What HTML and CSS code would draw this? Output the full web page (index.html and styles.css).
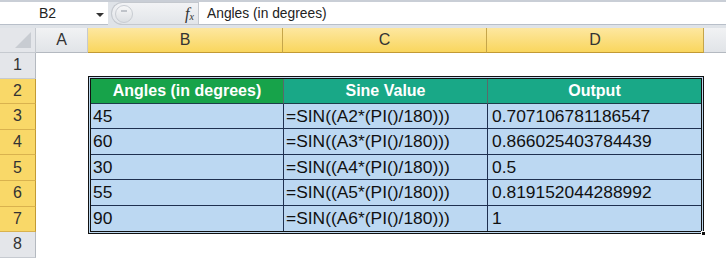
FILE: index.html
```html
<!DOCTYPE html>
<html>
<head>
<meta charset="utf-8">
<link rel="stylesheet" href="styles.css">
</head>
<body>
<div class="app">
  <div class="fbar">
    <div class="namebox"><span class="name">B2</span><span class="dd"></span></div>
    <div class="pill">
      <span class="knob"></span>
      <span class="fx">f<sub>x</sub></span>
    </div>
    <div class="formula">Angles (in degrees)</div>
  </div>
  <div class="sheet">
    <div class="corner"><span class="tri"></span></div>
    <div class="ch">A</div>
    <div class="ch sel">B</div>
    <div class="ch sel">C</div>
    <div class="ch sel">D</div>
    <div class="ch rest"></div>

    <div class="rh">1</div>
    <div class="rh sel">2</div>
    <div class="rh sel">3</div>
    <div class="rh sel">4</div>
    <div class="rh sel">5</div>
    <div class="rh sel">6</div>
    <div class="rh sel">7</div>
    <div class="rh">8</div>

    <div class="table">
      <div class="th green">Angles (in degrees)</div>
      <div class="th teal">Sine Value</div>
      <div class="th teal">Output</div>

      <div class="td">45</div><div class="td">=SIN((A2*(PI()/180)))</div><div class="td">0.707106781186547</div>
      <div class="td">60</div><div class="td">=SIN((A3*(PI()/180)))</div><div class="td">0.866025403784439</div>
      <div class="td">30</div><div class="td">=SIN((A4*(PI()/180)))</div><div class="td">0.5</div>
      <div class="td">55</div><div class="td">=SIN((A5*(PI()/180)))</div><div class="td">0.819152044288992</div>
      <div class="td">90</div><div class="td">=SIN((A6*(PI()/180)))</div><div class="td">1</div>
      <span class="handle"></span>
    </div>
  </div>
</div>
</body>
</html>
```
FILE: styles.css
```css
* { box-sizing: border-box; }
html, body { margin: 0; padding: 0; background: #fff; }
body { font-family: "Liberation Sans", Arial, sans-serif; color: #222; }
.app { width: 726px; height: 259px; overflow: hidden; }

.fbar {
  height: 28px;
  display: flex;
  background: #dfe3e8;
  border-top: 2px solid #c9ced6;
  padding-bottom: 3px;
}
.namebox {
  width: 108px;
  background: #fff;
  display: flex;
  align-items: center;
  border-bottom: 1px solid #b8bfc9;
  position: relative;
}
.name { font-size: 14px; margin-left: 39px; color: #222; }
.dd {
  position: absolute; left: 96px; top: 11px;
  border-left: 4px solid transparent; border-right: 4px solid transparent;
  border-top: 4px solid #333;
}
.pill {
  width: 87px;
  border-radius: 12px 0 0 12px;
  border: 1px solid #c4c8ce;
  border-right: none;
  margin-left: 3px;
  display: flex; align-items: center; justify-content: space-between;
  padding: 0 4px 0 3px;
  background: linear-gradient(#f2f3f5, #e2e5e9);
}
.knob {
  width: 18px; height: 18px; border-radius: 50%;
  border: 1px solid #c8ccd2;
  background: linear-gradient(#f7f7f8, #dcdfe3);
  position: relative;
}
.knob::after {
  content: ""; position: absolute; left: 5px; top: 4px; width: 6px; height: 2px; background: #bfc3c9;
}
.fx { font-family: "Liberation Serif", serif; font-style: italic; font-size: 16px; color: #333; }
.fx sub { font-size: 10px; vertical-align: -1px; }
.formula {
  flex: 1;
  background: #fff;
  border-left: 1px solid #c4c8ce;
  border-bottom: 1px solid #b8bfc9;
  font-size: 13.8px;
  padding-left: 8px;
  display: flex; align-items: center;
  color: #222;
}

.sheet {
  display: grid;
  grid-template-columns: 36px 52px 195px 204px 217px 1fr;
  grid-template-rows: 25px repeat(8, 25.6px);
}
.corner {
  background: #e4e6ea;
  border-right: 1px solid #c6cad0;
  border-bottom: 1px solid #c6cad0;
  position: relative;
}
.tri {
  position: absolute; right: 4px; bottom: 4px;
  border-left: 16px solid transparent; border-bottom: 16px solid #c8ccd2;
}
.ch {
  background: linear-gradient(#f1f2f4, #e1e4e8);
  border-right: 1px solid #c6cad0;
  border-bottom: 1px solid #b4b9c0;
  display: flex; align-items: center; justify-content: center;
  font-size: 16px; color: #333;
}
.ch.sel {
  background: linear-gradient(#fde7a0, #f9d65e);
  border-right: 1px solid #c5a54a;
  border-bottom: 1px solid #c29a34;
}
.ch.rest { border-right: none; }
.rh {
  grid-column: 1;
  background: #e4e6ea;
  border-right: 1px solid #b4b9c0;
  border-bottom: 1px solid #c6cad0;
  display: flex; align-items: center; justify-content: center;
  font-size: 16px; color: #333;
}
.rh.sel {
  background: #f9d868;
  border-right: 1px solid #c29a34;
  border-bottom: 1px solid #d9b24e;
}

.table {
  grid-column: 3 / 6;
  grid-row: 3 / 9;
  margin: -3px 0 -2px 0;
  border: 3px double #111;
  display: grid;
  grid-template-columns: 193px 204px 1fr;
  grid-template-rows: repeat(6, 1fr);
  position: relative;
  background: #bdd7ee;
}
.th {
  color: #fff; font-weight: bold; font-size: 16px;
  display: flex; align-items: center; justify-content: center;
  border-right: 1px solid #5a6a6a;
  border-bottom: 1px solid #1d3d4a;
}
.th:nth-child(3) { border-right: none; }
.green { background: #17a34a; }
.teal { background: #19a887; }
.td {
  font-size: 17.4px; color: #111;
  display: flex; align-items: center;
  padding-left: 2px;
  border-right: 1px solid #1f3050;
  border-bottom: 1px solid #1f3050;
  background: #bcd8f2;
}
.td:nth-child(3n) { border-right: none; padding-left: 4px; }
.td:nth-last-child(-n+4) { border-bottom: none; }
.handle {
  position: absolute; right: -5px; bottom: -5px;
  width: 5px; height: 5px; background: #111; border: 1px solid #fff;
}
```
